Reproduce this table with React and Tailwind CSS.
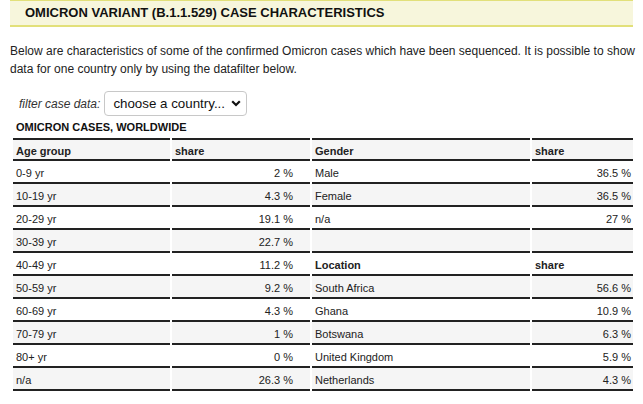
import React from "react";

const ageRows = [
  ["0-9 yr", "2 %"],
  ["10-19 yr", "4.3 %"],
  ["20-29 yr", "19.1 %"],
  ["30-39 yr", "22.7 %"],
  ["40-49 yr", "11.2 %"],
  ["50-59 yr", "9.2 %"],
  ["60-69 yr", "4.3 %"],
  ["70-79 yr", "1 %"],
  ["80+ yr", "0 %"],
  ["n/a", "26.3 %"],
];

const rightRows = [
  ["Male", "36.5 %"],
  ["Female", "36.5 %"],
  ["n/a", "27 %"],
  ["", ""],
  ["Location", "share", true],
  ["South Africa", "56.6 %"],
  ["Ghana", "10.9 %"],
  ["Botswana", "6.3 %"],
  ["United Kingdom", "5.9 %"],
  ["Netherlands", "4.3 %"],
];

function App() {
  const th =
    "bg-[#f5f5f5] border-y-2 border-[#222] pl-[3px] pt-[4px] pb-0 leading-[15px] text-left font-bold align-top";
  const td = "border-b-2 border-[#222] pl-[3px] pt-[5px] pb-[1px] leading-[15px] align-top h-[23px]";

  return (
    <main
      className="bg-white w-full min-h-screen text-[#222]"
      style={{ fontFamily: '"Liberation Sans", Arial, sans-serif' }}
    >
      <div className="pl-[10px] pr-[10px]">
        <h1 className="bg-[#f7f6dc] border-t border-b-2 border-[#e2e07a] h-[27px] pl-[15px] text-[13px] font-bold leading-[24px] text-[#111]">
          OMICRON VARIANT (B.1.1.529) CASE CHARACTERISTICS
        </h1>

        <p className="mt-[15px] text-[12px] leading-[18px] text-[#222] whitespace-nowrap">
          Below are characteristics of some of the confirmed Omicron cases which have been sequenced. It is possible to show
          <br />
          data for one country only by using the datafilter below.
        </p>

        <div className="flex items-center mt-[13px] pl-[9px] gap-[4px]">
          <span className="text-[12px] italic text-[#333]">filter case data:</span>
          <div className="flex items-center justify-between w-[143px] h-[25px] border border-[#c8c8c8] rounded-[4px] pl-[8px] pr-[5px] text-[13.33px] text-[#111]">
            <span>choose a country...</span>
            <svg width="10" height="7" viewBox="0 0 10 7">
              <path d="M1.2 1.2 L5 5 L8.8 1.2" fill="none" stroke="#111" strokeWidth="2.2" />
            </svg>
          </div>
        </div>

        <div className="mt-[4px] pl-[6px] text-[11px] font-bold leading-[15px] text-[#111]">
          OMICRON CASES, WORLDWIDE
        </div>

        <table className="mt-[3px] ml-px w-[624px] border-separate border-spacing-x-[2px] border-spacing-y-0 text-[11px] table-fixed">
          <colgroup>
            <col className="w-[157px]" />
            <col className="w-[138px]" />
            <col className="w-[218px]" />
            <col className="w-[101px]" />
          </colgroup>
          <thead>
            <tr>
              <th className={th}>Age group</th>
              <th className={th}>share</th>
              <th className={th}>Gender</th>
              <th className={th}>share</th>
            </tr>
          </thead>
          <tbody>
            {ageRows.map((row, i) => {
              const right = rightRows[i];
              const bg = i % 2 === 1 ? "bg-[#f5f5f5]" : "bg-white";
              const bold = right[2] ? "font-bold text-left" : "";
              return (
                <tr key={row[0]} className={bg}>
                  <td className={td}>{row[0]}</td>
                  <td className={`${td} text-right pr-[17px]`}>{row[1]}</td>
                  <td className={`${td} ${right[2] ? "font-bold" : ""}`}>{right[0]}</td>
                  <td className={`${td} pr-[2px] ${right[2] ? bold : "text-right"}`}>{right[1]}</td>
                </tr>
              );
            })}
          </tbody>
        </table>
      </div>
    </main>
  );
}

export default App;
